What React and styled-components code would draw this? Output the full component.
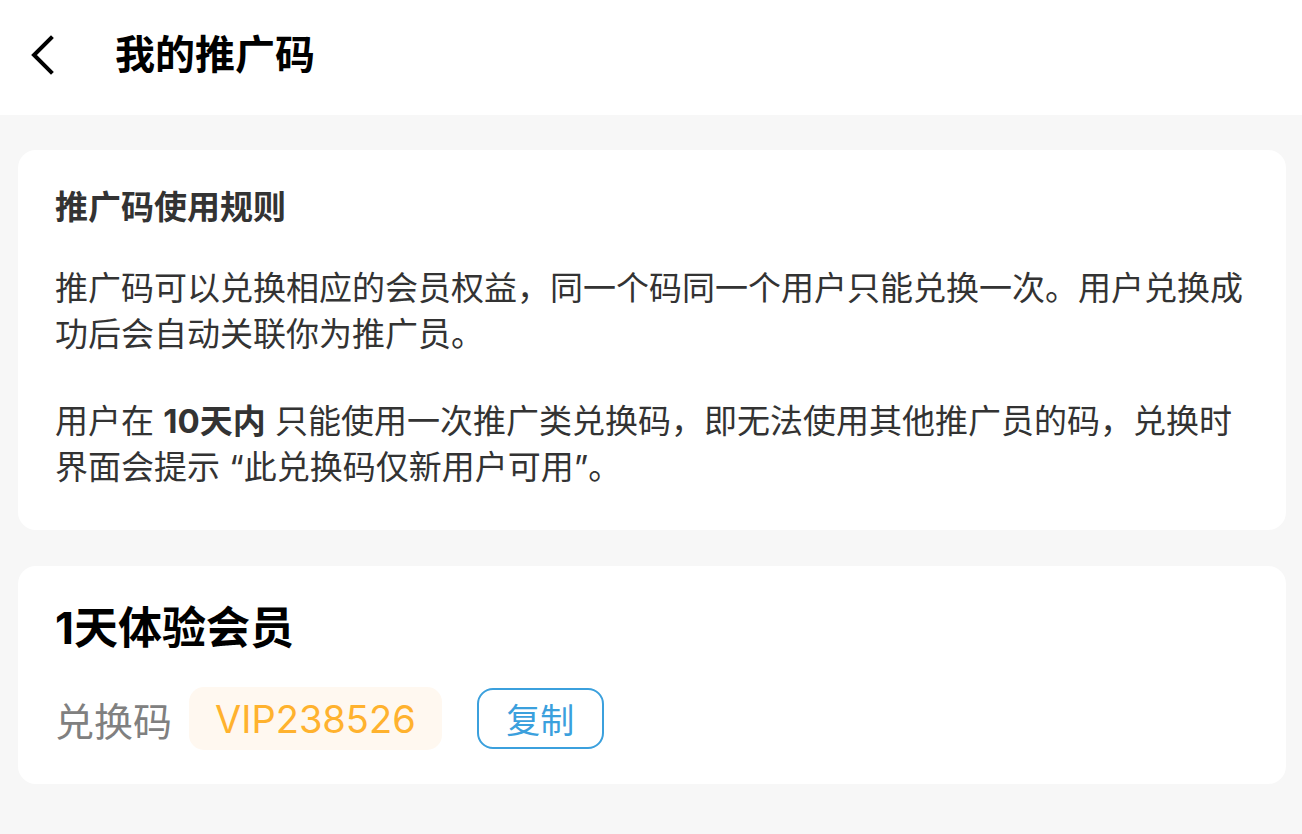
import React from 'react';
import styled, {createGlobalStyle} from 'styled-components';

const GlobalStyle = createGlobalStyle`
    html, body {
        margin: 0;
        padding: 0;
        background: #f7f7f7;
    }

    body {
        font-family: 'Inter', 'Noto Sans CJK SC', sans-serif;
        color: #333;
    }
`;

const Page = styled.div`
    min-height: 834px;
    background: #f7f7f7;
`;

const Header = styled.header`
    height: 115px;
    background: #fff;
    display: flex;
    align-items: center;
    padding: 0 0 6px 30px;
    box-sizing: border-box;
`;

const BackButton = styled.button`
    width: 24px;
    height: 40px;
    padding: 0;
    border: none;
    background: none;
    display: flex;
    align-items: center;
    justify-content: center;
    cursor: pointer;
`;

const Title = styled.h1`
    margin: 0 0 0 61px;
    font-size: 40px;
    font-weight: 700;
    color: #000;
    line-height: 1;
`;

const Content = styled.main`
    display: flex;
    flex-direction: column;
    gap: 36px;
    padding: 35px 16px 40px 18px;
`;

const Card = styled.section`
    background: #fff;
    border-radius: 18px;
    padding: ${props => props.$compact ? '34px 36px 34px 37px' : '34px 36px 40px 37px'};
`;

const RuleTitle = styled.h2`
    margin: 0 0 35px;
    font-size: 33px;
    font-weight: 700;
    line-height: 46px;
    color: #333;
`;

const Paragraph = styled.p`
    margin: 0;
    font-size: 33px;
    line-height: 46px;
    color: #333;

    & + & {
        margin-top: 41px;
    }

    strong {
        font-weight: 700;
    }
`;

const PlanName = styled.h3`
    margin: 0 0 31px;
    font-size: 44px;
    font-weight: 700;
    line-height: 56px;
    color: #000;
`;

const CodeRow = styled.div`
    display: flex;
    align-items: center;
`;

const CodeLabel = styled.span`
    font-size: 39px;
    color: #808080;
    margin-right: 17px;
`;

const CodeBadge = styled.span`
    height: 63px;
    padding: 0 26px;
    display: inline-flex;
    align-items: center;
    background: #fff8f0;
    border-radius: 15px;
    font-size: 38px;
    color: #ffb22e;
`;

const CopyButton = styled.button`
    margin-left: 35px;
    width: 127px;
    height: 61px;
    border: 2px solid #3ba0dd;
    border-radius: 16px;
    background: #fff;
    color: #3ba0dd;
    font-family: 'Noto Sans CJK SC', sans-serif;
    font-size: 34px;
    cursor: pointer;
`;

const App = () => {
    return (
        <Page>
            <GlobalStyle />
            <Header>
                <BackButton aria-label="back">
                    <svg width="24" height="40" viewBox="0 0 24 40" fill="none">
                        <path d="M21 3 L4 20 L21 37" stroke="#000" strokeWidth="4" strokeLinecap="square" strokeLinejoin="miter" />
                    </svg>
                </BackButton>
                <Title>我的推广码</Title>
            </Header>
            <Content>
                <Card>
                    <RuleTitle>推广码使用规则</RuleTitle>
                    <Paragraph>
                        推广码可以兑换相应的会员权益，同一个码同一个用户只能兑换一次。用户兑换成功后会自动关联你为推广员。
                    </Paragraph>
                    <Paragraph>
                        用户在 <strong>10天内</strong> 只能使用一次推广类兑换码，即无法使用其他推广员的码，兑换时界面会提示 “此兑换码仅新用户可用”。
                    </Paragraph>
                </Card>
                <Card $compact>
                    <PlanName>1天体验会员</PlanName>
                    <CodeRow>
                        <CodeLabel>兑换码</CodeLabel>
                        <CodeBadge>VIP238526</CodeBadge>
                        <CopyButton>复制</CopyButton>
                    </CodeRow>
                </Card>
            </Content>
        </Page>
    );
}

export default App;
